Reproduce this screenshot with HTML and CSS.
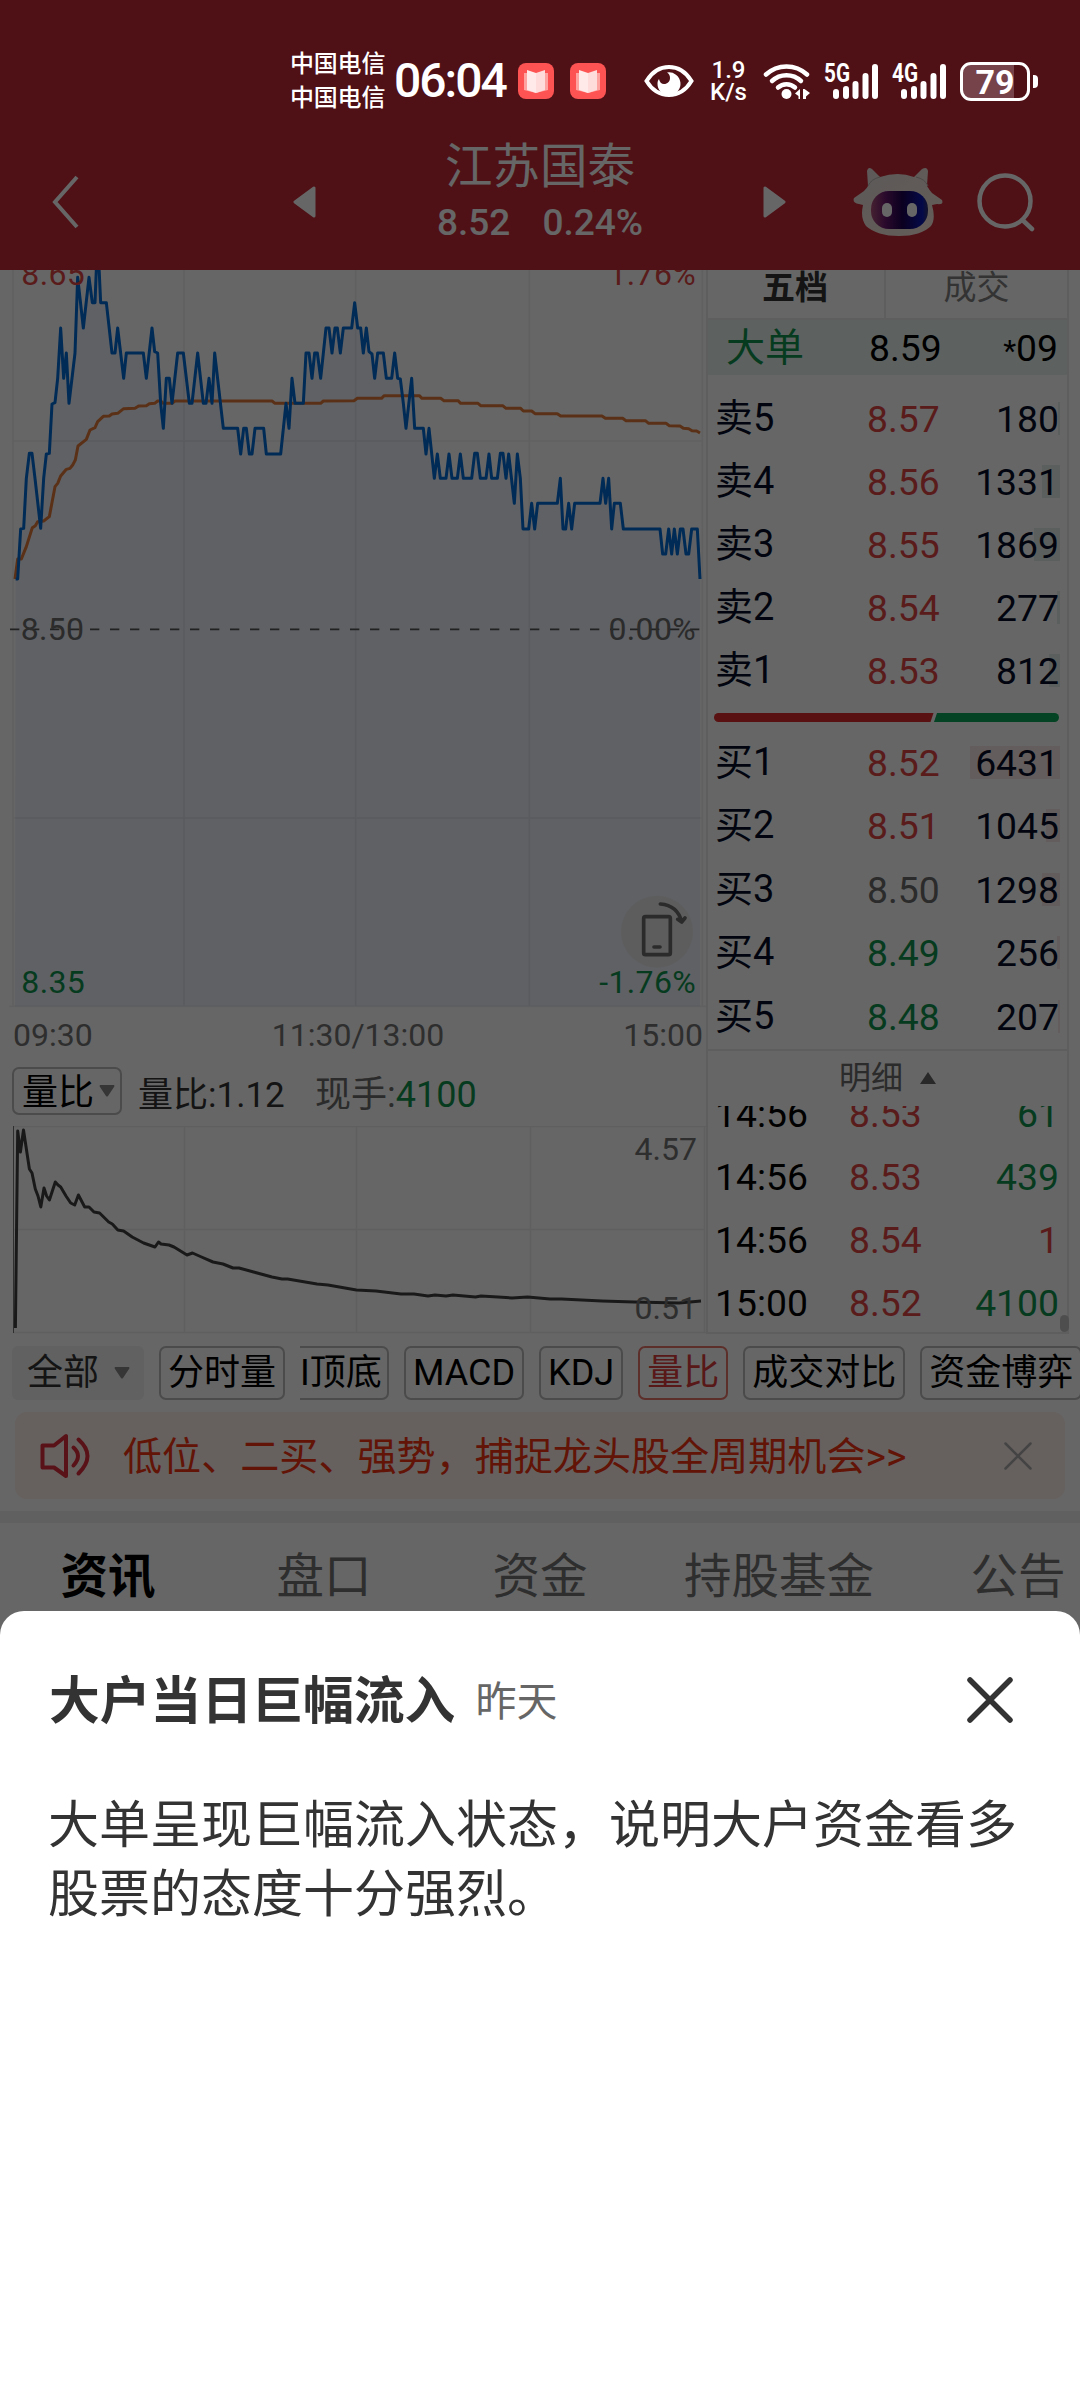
FILE: index.html
```html
<!DOCTYPE html>
<html lang="zh-CN">
<head>
    <meta charset="UTF-8">
    <meta name="viewport" content="width=device-width, initial-scale=1.0">
    <title>江苏国泰</title>
    <link rel="stylesheet" href="styles.css">
</head>
<body>
    <div class="status-bar">
        <div class="carriers"><span>中国电信</span><span>中国电信</span></div>
        <div class="clock">06:04</div>
        <svg class="app-icon" width="36" height="36" viewBox="0 0 36 36">
            <rect width="36" height="36" rx="8" fill="#fd5453"/>
            <path d="M6 10h24v17l-12 3-12-3z" fill="#ffa3a1"/>
            <path d="M9 7l9 3v20l-9-3z" fill="#ffe9e9"/>
            <path d="M27 7l-9 3v20l9-3z" fill="#ffdcdc"/>
        </svg>
        <svg class="app-icon" width="36" height="36" viewBox="0 0 36 36">
            <rect width="36" height="36" rx="8" fill="#fd5453"/>
            <path d="M6 10h24v17l-12 3-12-3z" fill="#ffa3a1"/>
            <path d="M9 7l9 3v20l-9-3z" fill="#ffe9e9"/>
            <path d="M27 7l-9 3v20l9-3z" fill="#ffdcdc"/>
        </svg>
        <svg class="eye" width="50" height="34" viewBox="0 0 50 34">
            <path d="M2.500 17C8 8 16 3 25 3s17 5 22.500 14C42 26 34 31 25 31S8 26 2.500 17z" fill="none" stroke="#fff" stroke-width="4"/>
            <path d="M23 8.500a11.500 11.500 0 1 1-9.500 11c0-2 .5-3 1.500-4.500.5 3 2.500 5 5 5 3.500 0 6-2.500 6-6 0-2.500-1-4.500-3-5.500z" fill="#fff"/>
        </svg>
        <div class="speed"><span>1.9</span><span>K/s</span></div>
        <svg class="wifi" width="48" height="38" viewBox="0 0 48 38">
            <g fill="none" stroke="#fff" stroke-width="4.500" stroke-linecap="round">
                <path d="M3 12.500a30 30 0 0 1 41 0"/>
                <path d="M9 19a21 21 0 0 1 29 0"/>
                <path d="M15 25.500a12.500 12.500 0 0 1 17 0"/>
            </g>
            <circle cx="23.500" cy="32" r="5" fill="#fff"/>
            <path d="M37 27v10h-1.500v-3L32 31.500zM40 27h1.500l5.500 4-4 3.500V37h-3z" fill="#fff"/>
        </svg>
        <svg class="signal" width="56" height="38" viewBox="0 0 56 38">
            <text x="0" y="20" class="net" textLength="26" lengthAdjust="spacingAndGlyphs">5G</text>
            <g stroke="#fff" stroke-width="6" stroke-linecap="round">
                <path d="M12 30v4M22 27v7M31.500 22v12M41.500 14v20M51 5v29"/>
            </g>
        </svg>
        <svg class="signal signal-2" width="56" height="38" viewBox="0 0 56 38">
            <text x="0" y="20" class="net" textLength="26" lengthAdjust="spacingAndGlyphs">4G</text>
            <g stroke="#fff" stroke-width="6" stroke-linecap="round">
                <path d="M12 30v4M22 27v7M31.500 22v12M41.500 14v20M51 5v29"/>
            </g>
        </svg>
        <div class="battery"><span class="battery-body">79</span><i></i></div>
    </div>

    <header class="header">
        <svg class="back" width="30" height="56" viewBox="0 0 30 56"><path d="M27 3L5 28l22 25" fill="none" stroke="#fff" stroke-width="4"/></svg>
        <svg class="prev" width="24" height="32" viewBox="0 0 24 32"><path d="M21 2v28L2 16z" fill="#fff" stroke="#fff" stroke-width="3" stroke-linejoin="round"/></svg>
        <div class="stock">
            <div class="stock-name">江苏国泰</div>
            <div class="stock-price"><span>8.52</span><span>0.24%</span></div>
        </div>
        <svg class="next" width="24" height="32" viewBox="0 0 24 32"><path d="M2 2v28l19-14z" fill="#fff" stroke="#fff" stroke-width="3" stroke-linejoin="round"/></svg>
        <svg class="robot" width="90" height="70" viewBox="0 0 90 70">
            <defs>
                <linearGradient id="face" x1="0" y1="0" x2="1" y2="0">
                    <stop offset="0" stop-color="#b0527c"/>
                    <stop offset=".25" stop-color="#6a1a6e"/>
                    <stop offset=".55" stop-color="#1c0050"/>
                    <stop offset=".9" stop-color="#0a18b4"/>
                    <stop offset="1" stop-color="#34346e"/>
                </linearGradient>
                <linearGradient id="head" x1="0" y1="0" x2="1" y2="1">
                    <stop offset="0" stop-color="#e6dede"/>
                    <stop offset="1" stop-color="#fbe9dc"/>
                </linearGradient>
            </defs>
            <path d="M15 19L14 4q1-5 5-2l8 8q18-6 34 0l8-8q5-3 6 2l-1 15q3 5 5 7l10 7q2 5-5 4l-5 1q4 14-1 21-10 10-32 10T13 59q-6-8-3-21l-4-1q-7-1-5-6l10-7q3-3 4-5z" fill="url(#head)"/>
            <path d="M15 19q3-7 12-9M75 19q-3-7-12-9" fill="none" stroke="#bdb6b6"/>
            <rect x="18" y="24" width="57" height="38" rx="18" fill="url(#face)"/>
            <rect x="29" y="36" width="10" height="14" rx="5" fill="#fff"/>
            <rect x="54" y="36" width="10" height="14" rx="5" fill="#fff"/>
        </svg>
        <svg class="search" width="60" height="60" viewBox="0 0 60 60"><g fill="none" stroke="#fff" stroke-width="4.500" stroke-linecap="round"><circle cx="29" cy="29" r="25.500"/><path d="M46.500 48L56 57"/></g></svg>
    </header>

    <main class="quote">
        <section class="charts">
            <svg class="minute-chart" width="706" height="738" viewBox="0 45 2118 2214">
                <path class="area" d="M47,972 53,972 62,822 71,820 79,670 88,595 96,595 105,670 122,820 131,670 139,597 148,595 156,447 165,443 173,370 182,219 191,370 199,294 207,445 225,294 233,67 250,219 267,67 277,143 285,143 291,-8 295,-8 302,143 319,143 336,294 345,294 353,219 371,370 379,294 430,294 439,370 456,219 464,290 473,294 482,445 490,520 499,370 508,370 516,445 533,294 550,294 568,445 576,445 593,294 610,445 618,445 627,370 636,445 644,294 670,520 713,520 722,597 731,520 739,520 748,597 756,597 765,520 791,520 799,597 842,597 858,445 867,520 876,370 885,445 910,445 918,294 927,294 936,370 944,294 952,294 962,370 978,219 987,219 996,294 1005,219 1012,219 1021,294 1030,219 1055,219 1064,143 1073,219 1082,219 1090,294 1099,219 1107,290 1116,297 1124,370 1133,294 1150,294 1159,370 1175,370 1184,294 1193,370 1201,372 1210,445 1218,520 1235,370 1244,520 1270,520 1278,597 1287,520 1303,670 1312,597 1321,670 1338,670 1347,597 1356,670 1372,670 1381,597 1390,670 1415,670 1424,595 1432,595 1441,670 1458,670 1467,597 1475,670 1492,670 1501,595 1509,595 1518,670 1526,597 1543,745 1552,597 1561,670 1569,822 1586,822 1595,745 1604,822 1613,745 1672,745 1681,670 1689,822 1697,822 1706,745 1715,822 1724,745 1800,745 1809,670 1817,745 1826,670 1835,822 1843,745 1861,745 1870,822 1980,822 1988,897 1997,897 2006,822 2015,897 2023,822 2032,897 2041,822 2049,822 2058,897 2066,897 2075,822 2092,822 2100,972V2254H45z"/>
                <path class="grid" d="M39,0V2254M552,0V2254M1067,0V2254M1588,0V2254M2107,0V2254M39,558H2107M39,1689H2107M28,2254H2118"/>
                <path class="dash" d="M30,1123H2110"/>
                <polyline class="avg" points="45,972 53,912 64,912 79,875 97,818 106,812 113,800 131,798 148,785 165,695 173,685 182,663 199,643 210,640 218,630 226,615 234,573 259,553 270,525 285,518 293,500 310,484 328,483 336,477 353,475 371,461 405,460 416,453 439,452 448,446 464,445 473,438 482,438 490,445 516,445 525,438 816,438 825,445 962,445 970,438 1062,437 1072,430 1145,430 1152,422 1258,422 1266,430 1322,430 1332,437 1374,437 1382,445 1434,445 1442,452 1508,452 1518,460 1562,460 1570,468 1595,468 1605,476 1672,476 1682,483 1806,483 1816,490 1868,490 1878,497 1936,497 1946,505 1998,505 2008,512 2040,513 2050,520 2066,521 2076,527 2090,528 2100,534"/>
                <polyline class="price" points="47,972 53,972 62,822 71,820 79,670 88,595 96,595 105,670 122,820 131,670 139,597 148,595 156,447 165,443 173,370 182,219 191,370 199,294 207,445 225,294 233,67 250,219 267,67 277,143 285,143 291,-8 295,-8 302,143 319,143 336,294 345,294 353,219 371,370 379,294 430,294 439,370 456,219 464,290 473,294 482,445 490,520 499,370 508,370 516,445 533,294 550,294 568,445 576,445 593,294 610,445 618,445 627,370 636,445 644,294 670,520 713,520 722,597 731,520 739,520 748,597 756,597 765,520 791,520 799,597 842,597 858,445 867,520 876,370 885,445 910,445 918,294 927,294 936,370 944,294 952,294 962,370 978,219 987,219 996,294 1005,219 1012,219 1021,294 1030,219 1055,219 1064,143 1073,219 1082,219 1090,294 1099,219 1107,290 1116,297 1124,370 1133,294 1150,294 1159,370 1175,370 1184,294 1193,370 1201,372 1210,445 1218,520 1235,370 1244,520 1270,520 1278,597 1287,520 1303,670 1312,597 1321,670 1338,670 1347,597 1356,670 1372,670 1381,597 1390,670 1415,670 1424,595 1432,595 1441,670 1458,670 1467,597 1475,670 1492,670 1501,595 1509,595 1518,670 1526,597 1543,745 1552,597 1561,670 1569,822 1586,822 1595,745 1604,822 1613,745 1672,745 1681,670 1689,822 1697,822 1706,745 1715,822 1724,745 1800,745 1809,670 1817,745 1826,670 1835,822 1843,745 1861,745 1870,822 1980,822 1988,897 1997,897 2006,822 2015,897 2023,822 2032,897 2041,822 2049,822 2058,897 2066,897 2075,822 2092,822 2100,972"/>
                <circle cx="1971" cy="2030" r="108" fill="#e9e9e9"/>
                <g fill="none" stroke="#6b6b6b" stroke-width="11" stroke-linecap="round" stroke-linejoin="round">
                    <rect x="1931" y="1985" width="80" height="114" rx="5"/>
                    <path d="M1962 2076h18M1981 1947q52 4 64 54l10-12M2045 2001l-12-8"/>
                </g>
                <g class="axis">
                    <text class="up" x="64" y="90">8.65</text>
                    <text class="up" x="2088" y="90" text-anchor="end">1.76%</text>
                    <text x="62" y="1154">8.50</text>
                    <text x="2088" y="1154" text-anchor="end">0.00%</text>
                    <text class="down" x="64" y="2213">8.35</text>
                    <text class="down" x="2088" y="2213" text-anchor="end">-1.76%</text>
                </g>
            </svg>
            <div class="time-axis"><span>09:30</span><span>11:30/13:00</span><span>15:00</span></div>
            <div class="indicator">
                <div class="select"><span>量比</span><svg width="16" height="12" viewBox="0 0 16 12"><path d="M1 0h14q1 1 0 2L9 11q-1 1-2 0L1 2q-1-1 0-2z" fill="#888"/></svg></div>
                <span class="ratio">量比:1.12</span>
                <span class="hand">现手:<b>4100</b></span>
            </div>
            <svg class="ratio-chart" width="706" height="208" viewBox="0 0 706 208">
                <path class="grid-thin" d="M13 .5H706M13 103.500H704M13 206.500H706M184.500 0V207M356.500 0V207M530.500 0V207M704.500 0V207"/>
                <path d="M13.500 0V207" stroke="#777"/>
                <polyline class="ratio-line" points="15.400,202 17.700,5 20.400,26 23.500,4 29.400,43 32,47 35.300,63 38,70 40.800,81 44,62 46.600,70 49.400,74 55.300,56 58,59 60.700,61 66,70 70.700,77 74.700,79 78.400,69 84.700,81 89,81 94,86 99.600,87 108.700,96 112.300,98 117.800,104 123.600,105 132.200,111 143.600,117 155,121 158.500,116 161,118 169,119 174,121 187,129 192.500,127 201.500,131 213,136 223,138 233,142 239,142 253.600,146 272,151 282,153 287.600,153 317,158 328,159 356.400,164 376,165 401,168 414,168 428,170 435,169 446,170 453,169 475.500,171 481,170 498,171 512,172 527.600,171 550,173 561.600,173 602,175 634,176 679,177 701,175"/>
                <text x="697" y="33.500" text-anchor="end">4.57</text>
                <text x="697" y="193" text-anchor="end">0.51</text>
            </svg>
        </section>

        <aside class="book">
            <div class="book-tabs"><span class="active">五档</span><span>成交</span></div>
            <div class="big-order"><span>大单</span><b>8.59</b><em><small>*</small>09</em></div>
            <ul class="levels sell">
                <li><span>卖5</span><b>8.57</b><em>180<i style="width:2px"></i></em></li>
                <li><span>卖4</span><b>8.56</b><em>1331<i style="width:18px"></i></em></li>
                <li><span>卖3</span><b>8.55</b><em>1869<i style="width:26px"></i></em></li>
                <li><span>卖2</span><b>8.54</b><em>277<i style="width:3px"></i></em></li>
                <li><span>卖1</span><b>8.53</b><em>812<i style="width:11px"></i></em></li>
            </ul>
            <svg class="balance" width="345" height="9" viewBox="0 0 345 9">
                <path d="M4.500 0H219.500L216.500 9H4.500a4.500 4.500 0 0 1 0-9z" fill="#e02b2b"/>
                <path d="M223 0H340.500a4.500 4.500 0 0 1 0 9H220z" fill="#0aa859"/>
            </svg>
            <ul class="levels buy">
                <li><span>买1</span><b>8.52</b><em>6431<i style="width:90px"></i></em></li>
                <li><span>买2</span><b>8.51</b><em>1045<i style="width:14px"></i></em></li>
                <li><span>买3</span><b class="flat">8.50</b><em>1298<i style="width:18px"></i></em></li>
                <li><span>买4</span><b class="down">8.49</b><em>256<i style="width:3px"></i></em></li>
                <li><span>买5</span><b class="down">8.48</b><em>207<i style="width:2px"></i></em></li>
            </ul>
            <div class="detail-title">明细<svg width="16" height="12" viewBox="0 0 16 12"><path d="M8 0l8 12H0z" fill="#666"/></svg></div>
            <ul class="ticks">
                <li><span>14:56</span><b>8.53</b><em class="down">61</em></li>
                <li><span>14:56</span><b>8.53</b><em class="down">439</em></li>
                <li><span>14:56</span><b>8.54</b><em class="up">1</em></li>
                <li><span>15:00</span><b>8.52</b><em class="down">4100</em></li>
            </ul>
            <i class="scrollbar"></i>
        </aside>
    </main>

    <nav class="chips">
        <div class="chip-all">全部<svg width="16" height="12" viewBox="0 0 16 12"><path d="M1 0h14q1 1 0 2L9 11q-1 1-2 0L1 2q-1-1 0-2z" fill="#888"/></svg></div>
        <span class="chip">分时量</span>
        <span class="chip cut">I顶底</span>
        <span class="chip">MACD</span>
        <span class="chip">KDJ</span>
        <span class="chip on">量比</span>
        <span class="chip">成交对比</span>
        <span class="chip">资金博弈</span>
    </nav>

    <div class="notice">
        <svg width="52" height="46" viewBox="0 0 52 46"><g fill="none" stroke="#dc2f3c" stroke-width="4" stroke-linecap="round" stroke-linejoin="round"><path d="M2.500 12.500h11.500L26 3v40L14 34.500H2.500z"/><path d="M33.500 14.500q9 8 0 18M38.500 6.500q18 16 0 34"/></g></svg>
        <span>低位、二买、强势，捕捉龙头股全周期机会&gt;&gt;</span>
        <svg width="28" height="28" viewBox="0 0 28 28"><path d="M1.500 1.500l25 25M26.500 1.500l-25 25" stroke="#aaa" stroke-width="2.500" stroke-linecap="round"/></svg>
    </div>

    <nav class="tabs">
        <span class="active">资讯</span>
        <span>盘口</span>
        <span>资金</span>
        <span>持股基金</span>
        <span>公告</span>
    </nav>

    <div class="mask"></div>

    <div class="sheet">
        <div class="sheet-head">
            <h2>大户当日巨幅流入</h2>
            <span>昨天</span>
            <svg width="48" height="48" viewBox="0 0 48 48"><path d="M4 4l40 40M44 4L4 44" stroke="#333" stroke-width="5.500" stroke-linecap="round"/></svg>
        </div>
        <p>大单呈现巨幅流入状态，说明大户资金看多股票的态度十分强烈。</p>
    </div>
</body>
</html>
```
FILE: styles.css
```css
* {
    box-sizing: border-box;
}
body {
    margin: 0;
    width: 1080px;
    height: 2400px;
    position: relative;
    overflow: hidden;
    background: #fff;
    color: #000;
    font-family: Roboto, "Noto Sans CJK SC", sans-serif;
}
svg {
    display: block;
    flex: none;
}
ul {
    list-style: none;
    margin: 0;
    padding: 0;
}
b, em, i {
    font-weight: 400;
    font-style: normal;
}
.up {
    color: #e24545;
    fill: #e24545;
}
.down {
    color: #0f944e;
    fill: #0f944e;
}

/* system status bar, stays above the mask */
.status-bar {
    position: absolute;
    z-index: 3;
    top: 0;
    left: 0;
    width: 1080px;
    height: 162px;
    padding-left: 290px;
    display: flex;
    align-items: center;
    color: #fff;
}
.carriers {
    width: 104px;
    font-size: 24px;
    line-height: 34px;
    font-weight: 500;
    letter-spacing: -0.2px;
    display: flex;
    flex-direction: column;
}
.clock {
    width: 124px;
    font-size: 48px;
    font-weight: 500;
    letter-spacing: -2px;
    line-height: 60px;
}
.app-icon {
    margin-right: 16px;
}
.eye {
    margin-left: 22px;
}
.speed {
    width: 69px;
    text-align: center;
    font-size: 24px;
    line-height: 22px;
    font-weight: 500;
    display: flex;
    flex-direction: column;
}
.signal {
    margin-left: 13px;
    overflow: visible;
}
.signal-2 {
    margin-left: 12px;
}
.net {
    font-size: 25px;
    font-weight: 700;
    fill: #fff;
}
.battery {
    display: flex;
    align-items: center;
    gap: 3px;
    margin-left: 12px;
}
.battery-body {
    width: 70px;
    height: 39px;
    border: 3px solid #fff;
    border-radius: 11px;
    background: linear-gradient(90deg, #77434a 80%, transparent 80%);
    font-size: 34px;
    font-weight: 700;
    line-height: 34px;
    text-align: center;
}
.battery i {
    width: 5px;
    height: 13px;
    border-radius: 0 4px 4px 0;
    background: #fff;
}

.header {
    height: 270px;
    padding: 134px 44px 0 50px;
    background: #c62837;
    color: #fff;
    display: flex;
    align-items: center;
}
.prev {
    margin-left: 213px;
}
.stock {
    width: 446px;
    padding-bottom: 20px;
    text-align: center;
}
.stock-name {
    font-size: 47.5px;
    line-height: 62px;
}
.stock-price {
    display: flex;
    justify-content: center;
    gap: 32px;
    font-size: 37px;
    font-weight: 500;
    line-height: 50px;
}
.robot {
    margin-left: 66px;
}
.search {
    margin-left: 33px;
}

.quote {
    display: flex;
    height: 1064px;
}
.charts {
    width: 706px;
}
.area {
    fill: #eef2fc;
}
.grid {
    fill: none;
    stroke: rgba(0, 0, 0, 0.06);
    stroke-width: 5;
}
.dash {
    stroke: #555;
    stroke-width: 5;
    stroke-dasharray: 28 32;
}
.avg, .price {
    fill: none;
    stroke-width: 9;
    stroke-linejoin: round;
}
.avg {
    stroke: #e27a38;
}
.price {
    stroke: #006bd6;
}
.axis text {
    font-size: 96px;
    letter-spacing: 1px;
}
.axis text:not(.up):not(.down) {
    fill: #6b6b6b;
}
.time-axis {
    height: 53px;
    padding: 0 3px 0 13px;
    display: flex;
    justify-content: space-between;
    font-size: 32px;
    line-height: 55px;
    color: #737373;
}
.indicator {
    display: flex;
    align-items: center;
    height: 65px;
    padding: 0 0 5px 12px;
    font-size: 35px;
}
.select {
    width: 110px;
    height: 48px;
    padding-left: 8px;
    border: 2px solid #bbb;
    border-radius: 7px;
    display: flex;
    align-items: center;
    gap: 5px;
    font-size: 36px;
}
.select span {
    padding-top: 3px;
    line-height: 44px;
}
.ratio {
    width: 177px;
    margin-left: 16px;
    color: #333;
}
.hand {
    color: #6b6b6b;
    font-size: 36px;
}
.hand b {
    color: #0f944e;
}
.grid-thin {
    fill: none;
    stroke: #eee;
    stroke-width: 1.5;
}
.ratio-line {
    fill: none;
    stroke: #404040;
    stroke-width: 3;
    stroke-linejoin: round;
}
.ratio-chart text {
    font-size: 32px;
    fill: #737373;
}

.book {
    position: relative;
    width: 363px;
    height: 1064px;
    border: solid #ececec;
    border-width: 0 2px 2px;
}
.book-tabs {
    display: flex;
    height: 50px;
    border-bottom: 2px solid #ececec;
    font-size: 33px;
    line-height: 36px;
    text-align: center;
    color: #808080;
}
.book-tabs span {
    flex: 1;
}
.book-tabs .active {
    flex: none;
    width: 178px;
    padding-right: 2px;
    border-right: 2px solid #ececec;
    color: #333;
    font-weight: 700;
}
.big-order, .levels li, .ticks li {
    display: flex;
    align-items: center;
    font-size: 37.3px;
    padding: 0 8px 0 7px;
}
.big-order {
    height: 55px;
    padding: 0 9px 0 18px;
    background: #e8f5f0;
}
.big-order span {
    width: 143px;
    font-size: 39px;
    line-height: 50px;
    color: #0f944e;
}
.big-order small {
    font-size: 30px;
}
.big-order em, .levels em, .ticks em {
    margin-left: auto;
}
.sell {
    padding-top: 12px;
}
.levels li {
    height: 63px;
    color: #050d26;
}
.buy li {
    height: 63.5px;
}
.levels span {
    width: 152px;
    font-size: 38px;
    line-height: 44px;
    padding-bottom: 2px;
}
.levels b, .ticks b {
    color: #e24545;
}
.levels .flat {
    color: #6b6b6b;
}
.levels .down {
    color: #0f944e;
}
.levels em {
    position: relative;
    z-index: 0;
}
/* volume bar behind the amount */
.levels em i {
    position: absolute;
    z-index: -1;
    right: -1px;
    top: 5px;
    height: 33px;
    background: #e3efed;
}
.buy em i {
    background: #fbe8e8;
}
.balance {
    margin: 11px 0 9px 6px;
}
.detail-title {
    display: flex;
    align-items: center;
    justify-content: center;
    gap: 17px;
    height: 57px;
    border-top: 2px solid #ececec;
    font-size: 32px;
    line-height: 54px;
    color: #6b6b6b;
}
.ticks {
    height: 229px;
    display: flex;
    flex-direction: column;
    justify-content: flex-end;
    overflow: hidden;
}
.ticks li {
    flex: none;
    height: 63px;
}
.ticks span {
    width: 134px;
}
.scrollbar {
    position: absolute;
    right: -2px;
    bottom: 0;
    width: 9px;
    height: 17px;
    border-radius: 5px;
    background: #c4c4c4;
}

.chips {
    display: flex;
    gap: 15px;
    margin: 12px 0 12px 12px;
    height: 54px;
    font-size: 36px;
    line-height: 50px;
    white-space: nowrap;
}
.chip-all {
    flex: none;
    width: 132px;
    padding-left: 15px;
    border-radius: 6px;
    background: #f2f2f2;
    color: #333;
    display: flex;
    align-items: center;
    gap: 15px;
}
.chip {
    flex: none;
    padding: 0 7px;
    border: 2px solid #bbb;
    border-radius: 7px;
}
.cut {
    width: 89px;
    padding: 0;
    border-left: 0;
    border-radius: 0 7px 7px 0;
}
.on {
    color: #dc3c3c;
    border-color: #e8756a;
}

.notice {
    display: flex;
    align-items: center;
    margin: 0 15px;
    height: 87px;
    padding: 0 33px 0 25px;
    border-radius: 12px;
    background: #fff0ed;
    color: #f5320f;
    font-size: 39.1px;
}
.notice span {
    flex: 1;
    padding: 0 0 5px 31px;
}

.tabs {
    display: flex;
    margin-top: 12px;
    border-top: 12px solid #f0f0f0;
    padding-top: 18px;
    font-size: 47.5px;
    line-height: 72px;
    text-align: center;
    color: #737373;
}
.tabs span {
    flex: none;
    min-width: 216px;
    padding: 0 36px;
}
.tabs .active {
    color: #000;
    font-weight: 700;
}

.mask {
    position: absolute;
    z-index: 1;
    inset: 0;
    background: rgba(0, 0, 0, 0.6);
}

/* bottom sheet */
.sheet {
    position: absolute;
    z-index: 2;
    left: 0;
    right: 0;
    top: 1611px;
    bottom: 0;
    padding: 52px 49px;
    border-radius: 24px 24px 0 0;
    background: #fff;
    color: #333;
    font-size: 51px;
}
.sheet-head {
    display: flex;
    align-items: center;
    height: 74px;
}
.sheet-head h2 {
    margin: 0 0 6px;
    font-size: 50.8px;
    font-weight: 700;
}
.sheet-head span {
    margin: 0 auto 5px 20px;
    font-size: 41px;
    color: #666;
}
.sheet-head svg {
    margin-right: 17px;
}
.sheet p {
    margin: 54px -10px 0 -1px;
    line-height: 69px;
}
```
